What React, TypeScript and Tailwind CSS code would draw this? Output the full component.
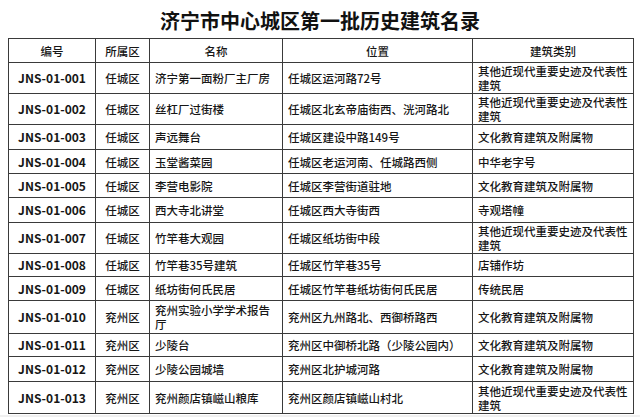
const rows: { id: string; district: string; name: string; place: string; kind: string; h: number }[] = [
  { id: 'JNS-01-001', district: '任城区', name: '济宁第一面粉厂主厂房', place: '任城区运河路72号', kind: '其他近现代重要史迹及代表性建筑', h: 31 },
  { id: 'JNS-01-002', district: '任城区', name: '丝杠厂过街楼', place: '任城区北玄帝庙街西、洸河路北', kind: '其他近现代重要史迹及代表性建筑', h: 31 },
  { id: 'JNS-01-003', district: '任城区', name: '声远舞台', place: '任城区建设中路149号', kind: '文化教育建筑及附属物', h: 25 },
  { id: 'JNS-01-004', district: '任城区', name: '玉堂酱菜园', place: '任城区老运河南、任城路西侧', kind: '中华老字号', h: 24 },
  { id: 'JNS-01-005', district: '任城区', name: '李营电影院', place: '任城区李营街道驻地', kind: '文化教育建筑及附属物', h: 24 },
  { id: 'JNS-01-006', district: '任城区', name: '西大寺北讲堂', place: '任城区西大寺街西', kind: '寺观塔幢', h: 25 },
  { id: 'JNS-01-007', district: '任城区', name: '竹竿巷大观园', place: '任城区纸坊街中段', kind: '其他近现代重要史迹及代表性建筑', h: 31 },
  { id: 'JNS-01-008', district: '任城区', name: '竹竿巷35号建筑', place: '任城区竹竿巷35号', kind: '店铺作坊', h: 23 },
  { id: 'JNS-01-009', district: '任城区', name: '纸坊街何氏民居', place: '任城区竹竿巷纸坊街何氏民居', kind: '传统民居', h: 24 },
  { id: 'JNS-01-010', district: '兖州区', name: '兖州实验小学学术报告厅', place: '兖州区九州路北、西御桥路西', kind: '文化教育建筑及附属物', h: 33 },
  { id: 'JNS-01-011', district: '兖州区', name: '少陵台', place: '兖州区中御桥北路（少陵公园内）', kind: '文化教育建筑及附属物', h: 23 },
  { id: 'JNS-01-012', district: '兖州区', name: '少陵公园城墙', place: '兖州区北护城河路', kind: '文化教育建筑及附属物', h: 25 },
  { id: 'JNS-01-013', district: '兖州区', name: '兖州颜店镇嵫山粮库', place: '兖州区颜店镇嵫山村北', kind: '其他近现代重要史迹及代表性建筑', h: 32 },
];

const cell = 'border border-[#3a3a3a] align-middle';

export default function App() {
  return (
    <div className="w-[640px] h-[417px] bg-white text-[#161616] overflow-hidden" style={{ fontFamily: '"Noto Sans CJK SC", "Noto Sans", sans-serif' }}>
      <div className="h-[38px] pt-[4px] flex items-center justify-center">
        <h1 className="text-[20px] leading-none font-bold text-[#111]">济宁市中心城区第一批历史建筑名录</h1>
      </div>
      <table className="ml-[8px] w-[625px] table-fixed border-collapse text-[11.5px] leading-[14px] font-medium">
        <colgroup>
          <col className="w-[87px]" />
          <col className="w-[54px]" />
          <col className="w-[133px]" />
          <col className="w-[190px]" />
          <col className="w-[161px]" />
        </colgroup>
        <thead>
          <tr className="h-[24px]">
            <th className={`${cell} font-medium text-center`}>编号</th>
            <th className={`${cell} font-medium text-center`}>所属区</th>
            <th className={`${cell} font-medium text-center`}>名称</th>
            <th className={`${cell} font-medium text-center`}>位置</th>
            <th className={`${cell} font-medium text-center`}>建筑类别</th>
          </tr>
        </thead>
        <tbody>
          {rows.map((r) => (
            <tr key={r.id} style={{ height: r.h }}>
              <td className={`${cell} text-center font-bold text-[12px]`}>{r.id}</td>
              <td className={`${cell} text-center`}>{r.district}</td>
              <td className={`${cell} pl-[5px] pr-[3px]`}>{r.name}</td>
              <td className={`${cell} pl-[5px] pr-[3px]`}>{r.place}</td>
              <td className={`${cell} pl-[5px] pr-[2px]`}>{r.kind}</td>
            </tr>
          ))}
        </tbody>
      </table>
      <div className="mt-[1px] h-[4px] bg-[#f0f0f0]" />
    </div>
  );
}
